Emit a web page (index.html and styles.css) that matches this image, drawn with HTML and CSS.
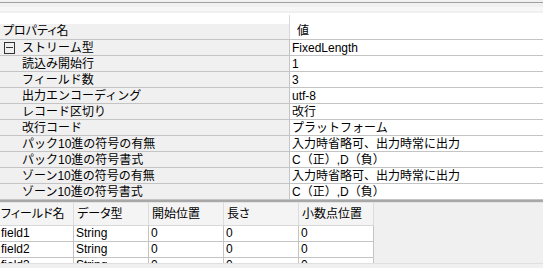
FILE: index.html
```html
<!DOCTYPE html>
<html lang="ja">
<head>
<meta charset="utf-8">
<link rel="stylesheet" href="styles.css">
</head>
<body>
<div class="app">
  <div class="topbar">
    <div class="tb-a"></div>
    <div class="tb-line"></div>
    <div class="tb-b"></div>
    <div class="tb-c"></div>
    <div class="tb-d"></div>
  </div>
  <div class="pgrid">
    <div class="pg-gap"><div class="gap-l"></div><div class="gap-r"></div></div>
    <div class="pg-head">
      <div class="pg-name">プロパティ名</div>
      <div class="pg-val head-val">値</div>
    </div>
    <div class="pg-row">
      <div class="pg-name cat"><span class="toggle"></span>ストリーム型</div>
      <div class="pg-val">FixedLength</div>
    </div>
    <div class="pg-row">
      <div class="pg-name sub">読込み開始行</div>
      <div class="pg-val">1</div>
    </div>
    <div class="pg-row">
      <div class="pg-name sub">フィールド数</div>
      <div class="pg-val">3</div>
    </div>
    <div class="pg-row">
      <div class="pg-name sub">出力エンコーディング</div>
      <div class="pg-val">utf-8</div>
    </div>
    <div class="pg-row">
      <div class="pg-name sub">レコード区切り</div>
      <div class="pg-val">改行</div>
    </div>
    <div class="pg-row">
      <div class="pg-name sub">改行コード</div>
      <div class="pg-val">プラットフォーム</div>
    </div>
    <div class="pg-row">
      <div class="pg-name sub">パック10進の符号の有無</div>
      <div class="pg-val">入力時省略可、出力時常に出力</div>
    </div>
    <div class="pg-row">
      <div class="pg-name sub">パック10進の符号書式</div>
      <div class="pg-val">C（正）,D（負）</div>
    </div>
    <div class="pg-row">
      <div class="pg-name sub">ゾーン10進の符号の有無</div>
      <div class="pg-val">入力時省略可、出力時常に出力</div>
    </div>
    <div class="pg-row">
      <div class="pg-name sub">ゾーン10進の符号書式</div>
      <div class="pg-val">C（正）,D（負）</div>
    </div>
  </div>
  <div class="splitter"></div>
  <div class="fgrid">
    <div class="fg-row fg-head">
      <div class="fg-cell">フィールド名</div>
      <div class="fg-cell">データ型</div>
      <div class="fg-cell">開始位置</div>
      <div class="fg-cell">長さ</div>
      <div class="fg-cell">小数点位置</div>
    </div>
    <div class="fg-row">
      <div class="fg-cell">field1</div>
      <div class="fg-cell">String</div>
      <div class="fg-cell">0</div>
      <div class="fg-cell">0</div>
      <div class="fg-cell">0</div>
    </div>
    <div class="fg-row">
      <div class="fg-cell">field2</div>
      <div class="fg-cell">String</div>
      <div class="fg-cell">0</div>
      <div class="fg-cell">0</div>
      <div class="fg-cell">0</div>
    </div>
    <div class="fg-row">
      <div class="fg-cell">field3</div>
      <div class="fg-cell">String</div>
      <div class="fg-cell">0</div>
      <div class="fg-cell">0</div>
      <div class="fg-cell">0</div>
    </div>
  </div>
  <div class="hscroll"></div>
</div>
</body>
</html>
```
FILE: styles.css
```css
html, body {
  margin: 0;
  padding: 0;
}
body {
  width: 543px;
  height: 268px;
  overflow: hidden;
  background: #f0f0f0;
  font-family: "Liberation Sans", "Noto Sans CJK JP", sans-serif;
  font-size: 12px;
  color: #000;
}
.app {
  display: flex;
  flex-direction: column;
  height: 268px;
}
.topbar {
  display: flex;
  flex-direction: column;
  flex: none;
}
.tb-a { height: 2px; background: #f0f0f0; }
.tb-line { height: 1px; background: #a0a0a0; }
.tb-b { height: 4px; background: #f0f0f0; }
.tb-c { height: 4px; background: #f7f7f7; }
.tb-d { height: 2px; background: #f0f0f0; }

.pgrid {
  display: flex;
  flex-direction: column;
  flex: none;
  background: #fff;
}
.pg-gap {
  height: 11px;
  display: grid;
  grid-template-columns: 290px 1fr;
}
.gap-l { border-right: 1px solid #d8d8d8; margin-top: 2px; }
.pg-head, .pg-row {
  display: grid;
  grid-template-columns: 290px 1fr;
  height: 16px;
  box-sizing: border-box;
  border-bottom: 1px solid #c4c4c4;
}
.pg-name {
  background: #f0f0f0;
  border-right: 1px solid #c4c4c4;
  line-height: 15px;
  padding-top: 1px;
  white-space: nowrap;
  overflow: hidden;
  padding-left: 3px;
}
.pg-head .pg-name {
  border-right-color: #d8d8d8;
  font-feature-settings: "palt";
  padding-top: 0;
}
.pg-name.sub, .pg-name.cat { padding-left: 22px; }
.pg-name.cat { position: relative; }
.toggle {
  position: absolute;
  left: 4px;
  top: 2px;
  width: 9px;
  height: 10px;
  border: 1px solid #333;
}
.toggle::after {
  content: "";
  position: absolute;
  left: 1px;
  right: 1px;
  top: 4px;
  height: 1px;
  background: #333;
}
.pg-val {
  line-height: 15px;
  padding-top: 1px;
  padding-left: 2px;
  white-space: nowrap;
  overflow: hidden;
}
.head-val { padding-left: 7px; padding-top: 0; }

.splitter {
  flex: none;
  height: 2px;
  background: #a8a8a8;
  border-bottom: 1px solid #e4e4e4;
}
.fgrid {
  display: flex;
  flex-direction: column;
  flex: 1;
  overflow: hidden;
  background: #f0f0f0;
}
.fg-row {
  flex: none;
  display: grid;
  grid-template-columns: 74px 75px 75px 75px 75px;
  height: 16px;
  box-sizing: border-box;
  border-bottom: 1px solid #c4c4c4;
  width: 374px;
}
.fg-row > .fg-cell {
  background: #fff;
  border-right: 1px solid #c4c4c4;
  line-height: 15px;
  padding-left: 2px;
  white-space: nowrap;
  overflow: hidden;
}
.fg-row > .fg-cell:first-child { padding-left: 1px; }
.fg-head {
  height: 23px;
  border-bottom: 1px solid #d8d8d8;
}
.fg-head > .fg-cell {
  background: #f4f4f4;
  border-right: 1px solid #dcdcdc;
  line-height: 22px;
  padding-left: 3px;
  font-feature-settings: "palt";
}
.hscroll {
  flex: none;
  height: 4px;
  background: #f0f0f0;
  border-top: 1px solid #e0e0e0;
}
```
